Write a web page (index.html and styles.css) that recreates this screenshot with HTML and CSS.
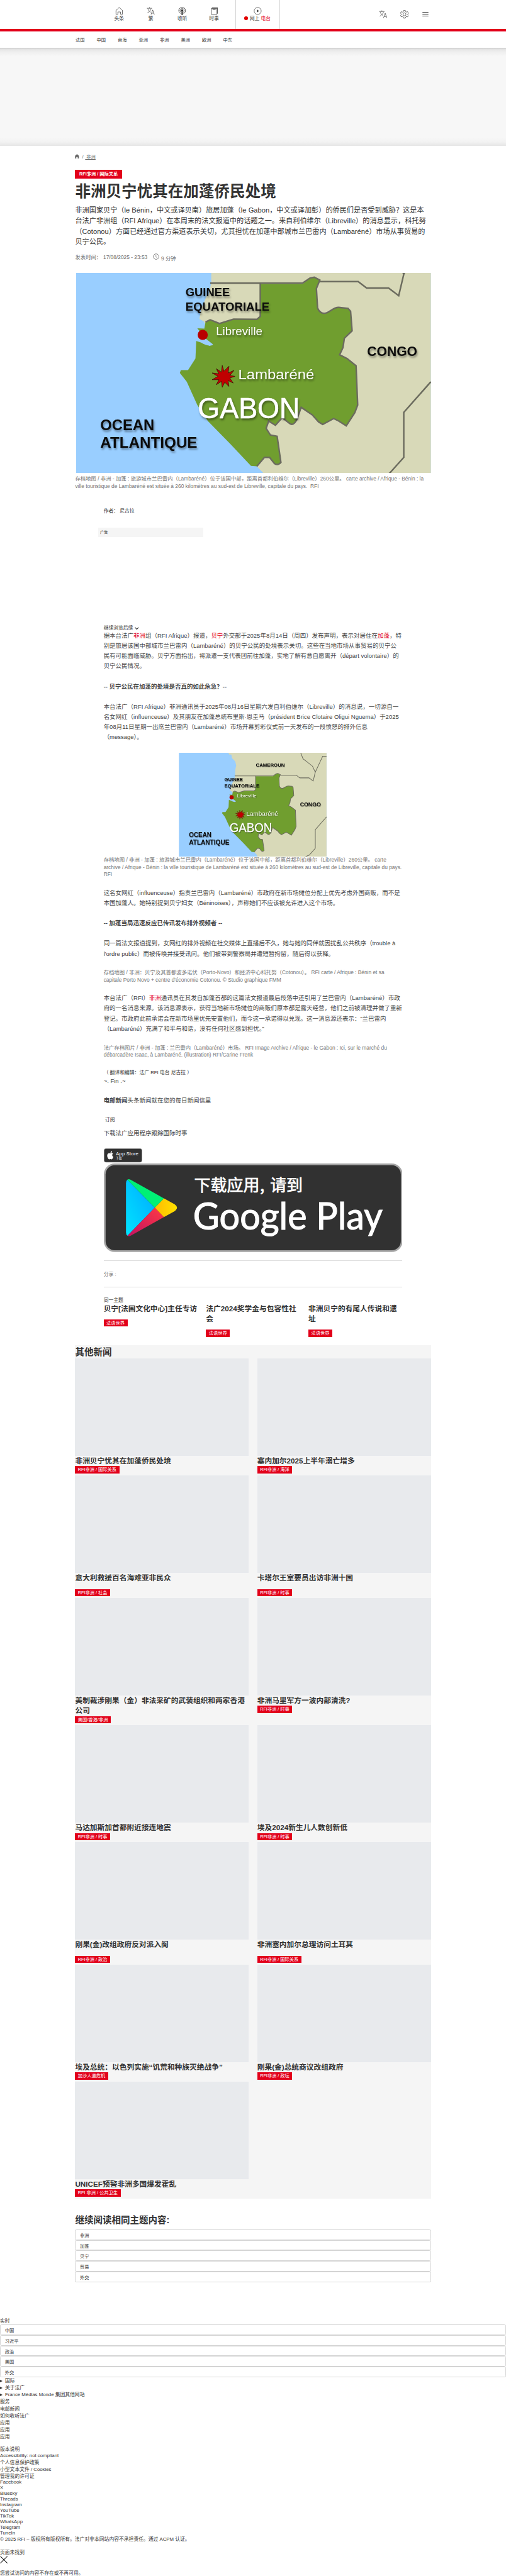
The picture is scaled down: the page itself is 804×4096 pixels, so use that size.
FILE: index.html
```html
<!DOCTYPE html>
<html lang="zh-Hans">
<head>
<meta charset="utf-8">
<title>非洲贝宁忧其在加蓬侨民处境</title>
<link rel="stylesheet" href="styles.css">
</head>
<body>
<svg class="defs" width="0" height="0">
  <symbol id="i-lang" viewBox="0 0 24 24"><g fill="none" stroke="currentColor" stroke-width="1.3"><path d="M1 4h15M8.500 1v3M3.500 5C5 10 8 13.500 12 16M13.500 5C12 10 8 14.500 2.500 17.500M13 23l5-14 5 14M14.800 18.500h6.500"/></g></symbol>
</svg>
<div class="page">
  <header>
    <div class="topbar">
      <nav class="main">
        <a><svg viewBox="0 0 24 24"><path fill="none" stroke="currentColor" stroke-width="1.300" d="M1.500 11.500L12 1.500l10.500 10M2.500 11v11h5.500v-7h8v7h5.500V11"/></svg>头条</a>
        <a><svg><use href="#i-lang"/></svg>繁</a>
        <a><svg viewBox="0 0 24 24"><g fill="none" stroke="currentColor" stroke-width="1.500"><path d="M8 19.500C-2 15 1 1.500 12 1.500S26 15 16 19.500M8.500 15.500C3 12 6 5 12 5s9 7 3.500 10.500"/></g><circle cx="12" cy="11" r="3.500" fill="currentColor"/><rect x="10" y="15" width="4" height="9" fill="currentColor"/></svg>收听</a>
        <a><svg viewBox="0 0 24 24"><path fill="currentColor" d="M5 2h18v18h-2V4H5z"/><path fill="none" stroke="currentColor" stroke-width="1.500" d="M3 5h17v17H3zM7 8.500h9"/></svg>时事</a>
        <a class="live"><svg viewBox="0 0 24 24"><circle cx="12" cy="12" r="10.500" fill="none" stroke="currentColor" stroke-width="1.300"/><path d="M10 7.500l6 4.500-6 4.500z" fill="currentColor"/></svg><span><i></i>网上 <b>电台</b></span></a>
      </nav>
      <div class="tools">
        <svg><use href="#i-lang"/></svg>
        <svg viewBox="0 0 24 24"><g fill="none" stroke="currentColor" stroke-width="1.400"><circle cx="12" cy="12" r="4.300"/><path d="M9.500 1h5l.7 3.300 2.600 1.500L21 4.700l2.500 4.300-2.500 2.300v1.500l2.500 2.300L21 19.400l-3.200-1.100-2.600 1.500-.7 3.200h-5l-.7-3.200-2.600-1.500L3 19.400.500 15.100 3 12.800v-1.500L.500 9 3 4.700l3.200 1.100 2.600-1.500z"/></g></svg>
        <svg viewBox="0 0 24 24"><path stroke="currentColor" stroke-width="2" d="M4 7h17M4 12h17M4 17h17"/></svg>
      </div>
    </div>
    <nav class="sub"><a>法国</a><a>中国</a><a>台海</a><a>亚洲</a><a>非洲</a><a>美洲</a><a>欧洲</a><a>中东</a></nav>
  </header>
  <div class="banner"></div>
  <main>
    <div class="crumb"><svg viewBox="0 0 12 13"><path fill="#666" d="M6 0l5.500 5v8h-3.500V8.500H4V13H.500V5z"/></svg><span>/</span><a>&nbsp;非洲</a></div>
    <span class="tag big">RFI非洲 / 国际关系</span>
    <h1>非洲贝宁忧其在加蓬侨民处境</h1>
    <p class="lead">非洲国家贝宁（le Bénin，中文或译贝南）旅居加蓬（le Gabon，中文或译加彭）的侨民们是否受到威胁？这是本<br>台法广非洲组（RFI Afrique）在本周末的法文报道中的话题之一。来自利伯维尔（Libreville）的消息显示，科托努<br>（Cotonou）方面已经通过官方渠道表示关切，尤其担忧在加蓬中部城市兰巴雷内（Lambaréné）市场从事贸易的<br>贝宁公民。</p>
    <div class="date"><span>发表时间：</span><span>17/08/2025 - 23:53</span><svg viewBox="0 0 18 18"><circle cx="9" cy="9" r="7.800" fill="none" stroke="#666" stroke-width="1.400"/><path d="M8.500 4v5.500l3 2.500" fill="none" stroke="#666" stroke-width="1.300"/></svg><span class="dur">9 分钟</span></div>
    <svg class="hero" viewBox="0 53.500 420 236.800" preserveAspectRatio="none"><use href="#map"/></svg>
    <p class="cap wide">存档地图 / 非洲 - 加蓬 : 旅游城市兰巴雷内（Lambaréné）位于该国中部，距离首都利伯维尔（Libreville）260公里。 carte archive / Afrique - Bénin : la<br>ville touristique de Lambaréné est située à 260 kilomètres au sud-est de Libreville, capitale du pays. &nbsp;RFI</p>
    <article>
      <div class="author">作者： 尼古拉</div>
      <div class="ad">广告</div>
      <div class="more">继续浏览后续 <svg viewBox="0 0 12 8"><path d="M1 1l5 5.500L11 1" fill="none" stroke="#333" stroke-width="2"/></svg></div>
      <p>据本台法广<a>非洲</a>组（RFI Afrique）报道，<a>贝宁</a>外交部于2025年8月14日（周四）发布声明，表示对居住在<a>加蓬</a>，特<br>别是旅居该国中部城市兰巴雷内（Lambaréné）的贝宁公民的处境表示关切。这些在当地市场从事贸易的贝宁公<br>民有可能面临威胁。贝宁方面指出，将派遣一支代表团前往加蓬，实地了解有意自愿离开（départ volontaire）的<br>贝宁公民情况。</p>
      <p><strong>-- 贝宁公民在加蓬的处境是否真的如此危急？--</strong></p>
      <p>本台法广（RFI Afrique）非洲通讯员于2025年08月16日星期六发自利伯维尔（Libreville）的消息说，一切源自一<br>名女网红（influenceuse）及其朋友在加蓬总统布里斯·恩圭马（président Brice Clotaire Oligui Nguema）于2025<br>年08月11日星期一出席兰巴雷内（Lambaréné）市场开幕剪彩仪式前一天发布的一段愤怒的排外信息<br>（message）。</p>
      <svg class="inline-map" viewBox="0 0 420 296">
        <g id="map">
          <rect width="420" height="296" fill="#99ceff"/>
          <path fill="#d8d9b8" d="M141 0l2 5 6 0 1 4 1 6 9 9 3 12-3 14v15l-6 27-8 15 6 6 60 60v100l2 10 7 7 3 6h196V0z"/>
          <path fill="#99ceff" d="M143 100l9 10-2 14 15 100 42 58 7 1 7 7 3 6H120V130z"/>
          <path fill="#d8d9b8" d="M148 96l-2 12 7 4 6-4 12 5 16-5h28V80h-60z"/>
          <path fill="#709e2f" d="M218 66.600L268 66.600L277 60L282 58.500L288.600 62L284.500 72L285.900 95C288 100 291 101.500 294 101.300C300 101 304 94 311 94.300L322 95.500L325 99L326.800 122L317.600 131L316 142L312 150.500L321 155L331.500 163.500L333.400 210L330 219L319.900 234.600L311 229L305 226L292 233L287 230L280 222L266.500 212.700L261 228Q257 235 253 232L244 225L236 234L228 229L225 237.700L230 245.500L238 247L242.500 278Q239 282 235 279.500L229 272L223 272L214 282.700L207 282L183 256.500L156 229L143.500 210L131 182.500L122.800 172L124 168.700L132.500 168.700L141.300 154.800L142.200 134L150 135L158 140L162 138L153 131L143.500 119L151.800 119.400L153.200 111.700L158.700 109L169.800 113.400L186.400 108.200L214 108.500L218 104.800z"/>
          <path fill="#99ceff" d="M142 134q14-2 20 5-6 2-14-3z"/>
          <g fill="none" stroke="#6b6b5e" stroke-width="1.800">
            <path d="M158.700 65.600H268L277 59.500L282 58.500L288.600 62L284.500 72L285.900 95C288 100 291 101.500 294 101.300C300 101 304 94 311 94.300L322 95.500L325 99L326.800 122L317.600 131L316 142L312 150.500L321 155L331.500 163.500L333.400 210L330 219L319.900 234.600L311 229L305 226L292 233L287 230L280 222L266.500 212.700L261 228Q257 235 253 232L244 225L236 234L228 229L225 237.700L230 245.500L238 247L242.500 278Q239 282 235 279.500L229 272L223 272L214 282.700"/>
            <path d="M218 66V105L214 108.500L186.400 108.200L169.800 113.400L158.700 109L153.200 111.700M288.600 63.800H334L344 71.400H370L382 80.400L388 55L380 38L353 17L346.600 0M388 55L409 10H420M420 182.500L388 218.700V272L371 291L360 296"/>
          </g>
          <g class="map-dark">
            <text x="219" y="39.400" font-size="14.300" textLength="82" lengthAdjust="spacingAndGlyphs">CAMEROUN</text>
            <text x="129.500" y="81" font-size="13.500" textLength="52.500" lengthAdjust="spacingAndGlyphs">GUINEE</text>
            <text x="129.500" y="98.200" font-size="13.500" textLength="99.500" lengthAdjust="spacingAndGlyphs">EQUATORIALE</text>
            <text x="344.500" y="152.200" font-size="16" textLength="59.500" lengthAdjust="spacingAndGlyphs">CONGO</text>
            <text x="28.500" y="239.500" font-size="18.500" textLength="64" lengthAdjust="spacingAndGlyphs">OCEAN</text>
            <text x="28.500" y="260.700" font-size="18.500" textLength="115" lengthAdjust="spacingAndGlyphs">ATLANTIQUE</text>
          </g>
          <g class="map-light">
            <text x="165.600" y="127.200" font-size="14" textLength="55" lengthAdjust="spacingAndGlyphs">Libreville</text>
            <text x="192" y="179.400" font-size="17" textLength="90" lengthAdjust="spacingAndGlyphs">Lambaréné</text>
            <text x="144" y="225.300" font-size="35" stroke="#fff" stroke-width=".5" textLength="121" lengthAdjust="spacingAndGlyphs">GABON</text>
          </g>
          <circle cx="149.900" cy="126.900" r="6" fill="#b80000"/>
          <path fill="#c00000" stroke="#3a1205" stroke-width=".6" d="M173 163l2 7 6-6-1 8 7-3-5 6 6 1-6 2 4 6-6-3 1 7-5-5-3 6-1-7-6 4 3-6-8 0 7-4-7-4 8 1-3-6 6 4z"/>
        </g>
      </svg>
      <p class="cap first">存档地图 / 非洲 - 加蓬 : 旅游城市兰巴雷内（Lambaréné）位于该国中部，距离首都利伯维尔（Libreville）260公里。 carte<br>archive / Afrique - Bénin : la ville touristique de Lambaréné est située à 260 kilomètres au sud-est de Libreville, capitale du pays.<br>RFI</p>
      <p>这名女网红（influenceuse）指责兰巴雷内（Lambaréné）市政府在新市场摊位分配上优先考虑外国商贩，而不是<br>本国加蓬人。她特别提到贝宁妇女（Béninoises），声称她们不应该被允许进入这个市场。</p>
      <p><strong>-- 加蓬当局迅速反应已传讯发布排外视频者 --</strong></p>
      <p>同一篇法文报道提到，女网红的排外视频在社交媒体上直播后不久，她与她的同伴就因扰乱公共秩序（trouble à<br>l'ordre public）而被传唤并接受讯问。他们被带到警察局并遭短暂拘留，随后得以获释。</p>
      <p class="cap">存档地图 / 非洲：贝宁及其首都波多诺伏（Porto-Novo）和经济中心科托努（Cotonou）。 RFI carte / Afrique : Bénin et sa<br>capitale Porto Novo + centre d'économie Cotonou. © Studio graphique FMM</p>
      <p>本台法广（RFI）<a>非洲</a>通讯员在其发自加蓬首都的这篇法文报道最后段落中还引用了兰巴雷内（Lambaréné）市政<br>府的一名消息来源。该消息源表示，获得当地新市场摊位的商贩们原本都是露天经营，他们之前被清理并做了重新<br>登记。市政府此前承诺会在新市场里优先安置他们，而今这一承诺得以兑现。这一消息源还表示：“兰巴雷内<br>（Lambaréné）充满了和平与和谐，没有任何社区感到担忧。”</p>
      <p class="cap">法广存档图片 / 非洲 - 加蓬 : 兰巴雷内（Lambaréné）市场。 RFI Image Archive / Afrique - le Gabon : Ici, sur le marché du<br>débarcadère Isaac, à Lambaréné. (illustration) RFI/Carine Frenk</p>
      <div class="sign"><small>（ 翻译和编辑：法广 RFI 电台 尼古拉 ）</small><span>~. Fin .~</span></div>
      <div class="news"><strong>电邮新闻</strong>头条新闻就在您的每日新闻信里</div>
      <div class="subscribe">订阅</div>
      <div class="apps">下载法广应用程序跟踪国际时事</div>
      <svg class="appstore" viewBox="0 0 109 40"><rect x=".5" y=".5" width="108" height="39" rx="6" fill="#313131" stroke="#a6a6a6"/><path fill="#fff" d="M18.500 12c2-1 5-.8 6.800 1.500-3.700 2.500-3 7.800.9 9.300-1 3-3 7-5.200 7-1.400 0-1.800-.8-3.500-.8s-2.200.8-3.500.8c-2.200 0-5.500-6-5.500-10.500 0-6 5-8.500 8-6.500 1 .4 1.400-.3 2-.8zM18 11.500c-.2-3 2-5 4.500-5.500.3 3-2 5.500-4.500 5.500z" transform="translate(1 1.500)"/><text class="as" x="34" y="19.500" font-size="13" textLength="64.500" lengthAdjust="spacingAndGlyphs">App Store</text><text x="34" y="31" font-size="8.500" fill="#fff">下载</text></svg>
      <svg class="gplay" viewBox="0 0 850 252">
        <defs>
          <linearGradient id="gb" x1="1" y1="0" x2="0" y2="1"><stop offset="0" stop-color="#00a8ff"/><stop offset="1" stop-color="#00e4ff"/></linearGradient>
          <linearGradient id="gy"><stop offset="0" stop-color="#ffbc00"/><stop offset="1" stop-color="#ffe000"/></linearGradient>
          <linearGradient id="gr" x1="1" y1="0" x2="0" y2="1"><stop offset="0" stop-color="#ff3a44"/><stop offset="1" stop-color="#c31162"/></linearGradient>
        </defs>
        <rect width="850" height="252" rx="31" fill="#a6a6a6"/><rect x="5" y="5" width="840" height="242" rx="26" fill="#313131"/>
        <path fill="url(#gb)" d="M67 46Q63 49 63 56V196Q63 203 67 206L145 126z"/>
        <path fill="#00f076" d="M67 46Q72 43 79 48L171 99.500L145 126z"/>
        <path fill="url(#gr)" d="M67 206Q72 209 79 204L171 152.500L145 126z"/>
        <path fill="url(#gy)" d="M171 99.500L201 116Q215 126 201 136L171 152.500L145 126z"/>
        <text class="cn" x="257" y="79.500" font-size="46.500">下载应用<tspan x="444">,</tspan><tspan x="473">请到</tspan></text>
        <text class="gp" x="254" y="188.500" font-size="108" textLength="539" lengthAdjust="spacingAndGlyphs">Google Play</text>
      </svg>
      <div class="share">分享 :</div>
      <div class="same">同一主题</div>
      <div class="three">
        <div><h3>贝宁[法国文化中心]主任专访</h3><span class="tag">法语世界</span></div>
        <div><h3>法广2024奖学金与包容性社<br>会</h3><span class="tag">法语世界</span></div>
        <div><h3>非洲贝宁的有尾人传说和遗<br>址</h3><span class="tag">法语世界</span></div>
      </div>
    </article>
    <section class="others">
      <h2>其他新闻</h2>
      <div class="grid">
        <div class="card"><div class="ph"></div><h3>非洲贝宁忧其在加蓬侨民处境</h3><span class="tag">RFI非洲 / 国际关系</span></div>
        <div class="card"><div class="ph"></div><h3>塞内加尔2025上半年溺亡增多</h3><span class="tag">RFI非洲 / 海洋</span></div>
        <div class="card loose"><div class="ph"></div><h3>意大利救援百名海难亚非民众</h3><span class="tag">RFI非洲 / 社会</span></div>
        <div class="card loose"><div class="ph"></div><h3>卡塔尔王室要员出访非洲十国</h3><span class="tag">RFI非洲 / 时事</span></div>
        <div class="card"><div class="ph"></div><h3>美制裁涉刚果（金）非法采矿的武装组织和两家香港<br>公司</h3><span class="tag">美国/香港/非洲</span></div>
        <div class="card"><div class="ph"></div><h3>非洲马里军方一波内部清洗?</h3><span class="tag">RFI非洲 / 时事</span></div>
        <div class="card"><div class="ph"></div><h3>马达加斯加首都附近接连地震</h3><span class="tag">RFI非洲 / 时事</span></div>
        <div class="card"><div class="ph"></div><h3>埃及2024新生儿人数创新低</h3><span class="tag">RFI非洲 / 时事</span></div>
        <div class="card loose"><div class="ph"></div><h3>刚果(金)改组政府反对派入阁</h3><span class="tag">RFI非洲 / 政治</span></div>
        <div class="card loose"><div class="ph"></div><h3>非洲塞内加尔总理访问土耳其</h3><span class="tag">RFI非洲 / 国际关系</span></div>
        <div class="card"><div class="ph"></div><h3>埃及总统：以色列实施“饥荒和种族灭绝战争”</h3><span class="tag">加沙人道危机</span></div>
        <div class="card"><div class="ph"></div><h3>刚果(金)总统商议改组政府</h3><span class="tag">RFI非洲 / 政坛</span></div>
        <div class="card"><div class="ph"></div><h3>UNICEF预警非洲多国爆发霍乱</h3><span class="tag">RFI 非洲 / 公共卫生</span></div>
      </div>
    </section>
    <h2 class="keep">继续阅读相同主题内容:</h2>
    <ul class="pills"><li>非洲</li><li>加蓬</li><li>贝宁</li><li>贸易</li><li>外交</li></ul>
  </main>
  <footer>
    <div>实时</div>
    <ul class="pills"><li>中国</li><li>习近平</li><li>政治</li><li>美国</li><li>外交</li></ul>
    <div class="sum">国际</div>
    <div class="sum">关于法广</div>
    <div class="sum">France Médias Monde 集团其他网站</div>
    <div>服务</div><div>电邮新闻</div><div>如何收听法广</div><div>应用</div><div>应用</div><div>应用</div>
    <div class="gap">版本说明</div>
    <div class="lat">Accessibility: not compliant</div>
    <div>个人信息保护政策</div><div>小型文本文件 / Cookies</div><div>管理我的许可证</div>
    <div class="lat">Facebook</div><div class="lat">X</div><div class="lat">Bluesky</div><div class="lat">Threads</div><div class="lat">Instagram</div><div class="lat">YouTube</div><div class="lat">TikTok</div><div class="lat">WhatsApp</div><div class="lat">Telegram</div><div class="lat">TuneIn</div>
    <div>© 2025 RFI – 版权所有版权所有。法广对非本网站内容不承担责任。通过 ACPM 认证。</div>
    <div class="gap">页面未找到</div>
    <svg class="close" viewBox="0 0 22 22"><path d="M1 1l20 20M21 1L1 21" stroke="#111" stroke-width="1.800"/></svg>
    <div>您尝试访问的内容不存在或不再可用。</div>
  </footer>
</div>
</body>
</html>
```
FILE: styles.css
```css
* { box-sizing: border-box; margin: 0; padding: 0; }
body { background: #fff; overflow: hidden; }
svg { display: block; }
.defs { position: absolute; }
.page {
  zoom: 0.5585;
  font: 14px/20px "Liberation Sans", "Noto Sans CJK SC", sans-serif;
  color: #333;
  white-space: nowrap;
  height: 7334px;
  overflow: hidden;
}

.topbar { height: 90px; border-bottom: 8px solid #e2001a; display: flex; justify-content: space-between; padding: 0 199px 0 294px; }
.main { display: flex; }
.main a { width: 90px; display: flex; flex-direction: column; align-items: center; padding-top: 20px; }
.main svg { width: 23px; height: 23px; }
.main .live { width: 128px; margin-left: 15px; border: solid #d4d4d4; border-width: 0 1px; }
.live i { display: inline-block; width: 10px; height: 10px; border-radius: 50%; background: #e20000; margin-right: 5px; }
.live b { font-weight: 400; color: #e2001a; }
.tools { display: flex; align-items: center; }
.tools svg { width: 24px; height: 24px; margin: 0 18px; color: #444; }
.sub { height: 46px; display: flex; gap: 34px; padding: 14px 0 0 215px; font-size: 13px; }
.banner { height: 280px; background: linear-gradient(#cdcdcd, #e6e6e6 5px, #efefef 12px, #f7f7f7 24px, #f7f7f7 256px, #f2f2f2 268px, #e6e6e6); }

main { width: 1012px; margin: 0 auto; }
.crumb { display: flex; height: 68px; padding-top: 21px; font-size: 13px; color: #666; }
.crumb svg { width: 12px; height: 13px; margin: 2px 8px 0 0; }
.crumb a { text-decoration: underline; margin-left: 5px; }
.tag { display: block; width: max-content; height: 21px; padding: 0 8px; background: #e2001a; color: #fff; font-size: 13px; line-height: 21px; }
.tag.big { height: 25px; padding: 0 12px; line-height: 25px; font-weight: 700; }
h1 { font-size: 44px; line-height: 60px; margin-top: 6px; }
.lead { font-size: 20px; line-height: 30px; margin-top: 9px; }
.date { display: flex; height: 73px; padding-top: 18px; font-size: 15px; line-height: 22px; color: #666; }
.date span:nth-child(2) { margin-left: 5px; }
.date svg { width: 18px; height: 18px; margin: 0 6px 0 15px; }
.date .dur { margin-top: 3px; }
.hero { width: 1009px; height: 569px; margin-left: 3px; }
.map-dark { font-family: "Liberation Sans", sans-serif; font-weight: 700; fill: #0c0c0c; filter: drop-shadow(1px 2px 1px rgba(0,0,0,.4)); }
.map-light { font-family: "Liberation Sans", sans-serif; fill: #fff; filter: drop-shadow(1px 2px 1px rgba(0,0,0,.4)); }

article { width: 850px; margin: 0 auto; }
article p { font-size: 17px; line-height: 28.9px; margin-bottom: 28.9px; color: #444; }
article p a { color: #e2001a; }
p.cap { font-size: 15px; line-height: 21px; color: #757575; margin: 0 0 26px; padding-top: 1px; }
p.cap.wide { padding-top: 8px; margin-bottom: 0; }
p.cap.first { padding-top: 0; }
.author { margin-top: 49px; }
.ad { width: 300px; height: 26px; margin: 38px 0 0 -16px; padding-left: 6px; background: #f5f5f5; font-size: 11px; line-height: 26px; }
.more { display: flex; align-items: center; gap: 5px; margin: 250px 0 -3px; }
.more svg { width: 12px; height: 8px; }
.inline-map { width: 421px; height: 296px; margin: 0 auto; }
.sign { height: 104px; padding-top: 2px; }
.sign small { display: block; font-size: 14px; line-height: 22px; }
.sign span { font-size: 17px; line-height: 24px; color: #444; }
.news, .apps { font-size: 17px; line-height: 28px; color: #444; }
.news { margin-top: -26px; }
.subscribe { margin: 31px 0 14px 4px; }
.apps { margin-bottom: 30px; }
.appstore { width: 109px; height: 40px; }
.appstore text { font-family: "Noto Sans CJK SC", sans-serif; }
.appstore .as { font-family: Roboto, sans-serif; fill: #fff; }
.gplay { width: 850px; height: 252px; margin-top: 3px; }
.cn { font-family: "Noto Sans CJK SC", sans-serif; fill: #fff; stroke: #fff; stroke-width: 1.2px; }
.gp { font-family: Lato, sans-serif; fill: #fff; stroke: #fff; stroke-width: 2px; }
.share { height: 77px; margin-top: 23px; padding-top: 29px; border: solid #dcdcdc; border-width: 1px 0; color: #757575; }
.same { margin-top: 26px; }
.three { display: grid; grid-template-columns: repeat(3, 1fr); gap: 24px; height: 119px; }
h3 { font-size: 21px; line-height: 29.4px; }
.three .tag { margin-top: 15px; }

.others { height: 2430px; background: #f5f5f5; }
h2 { font-size: 26px; line-height: 37px; padding-top: 1px; height: 37px; }
.grid { display: grid; grid-template-columns: 494px 494px; column-gap: 24px; row-gap: 4.4px; }
.ph { height: 277.9px; background: #e8eaed; }
.loose .tag { margin-top: 16.6px; }
.keep { margin: 41px 0 9px; }
.pills { list-style: none; }
.pills li { height: 30px; padding-left: 12px; border: 1px solid #d4d4d4; border-radius: 4px; font-size: 13px; line-height: 31px; }
footer { margin-top: 101px; }
.sum { padding-left: 15px; display: flex; align-items: center; }
.sum::before { content: ""; border: solid transparent; border-width: 5px 0 5px 8px; border-left-color: #333; margin: 0 7px 0 -15px; }
footer .lat { line-height: 16px; }
footer .gap { margin-top: 16px; }
.close { width: 22px; height: 22px; margin: 1px 0 17px; }
```
